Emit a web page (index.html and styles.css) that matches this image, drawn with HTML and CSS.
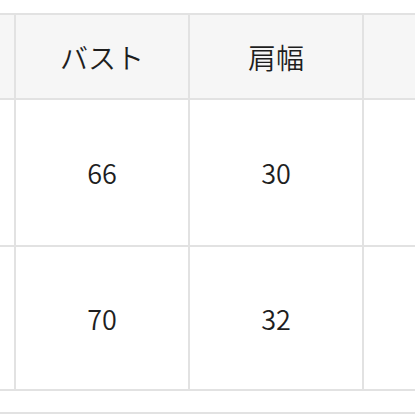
FILE: index.html
```html
<!DOCTYPE html>
<html lang="ja">
<head>
<meta charset="utf-8">
<link rel="stylesheet" href="styles.css">
</head>
<body>
<div class="table">
  <div class="cell head"></div>
  <div class="cell head">バスト</div>
  <div class="cell head">肩幅</div>
  <div class="cell head"></div>
  <div class="cell"></div>
  <div class="cell num">66</div>
  <div class="cell num">30</div>
  <div class="cell"></div>
  <div class="cell"></div>
  <div class="cell num">70</div>
  <div class="cell num">32</div>
  <div class="cell"></div>
</div>
<div class="footer"></div>
</body>
</html>
```
FILE: styles.css
```css
html, body {
  margin: 0;
  padding: 0;
  background: #ffffff;
  overflow: hidden;
}
body {
  width: 415px;
  height: 415px;
  font-family: "Noto Sans CJK JP", "Noto Sans", sans-serif;
  color: #1e1e1e;
}
.table {
  margin-top: 13px;
  padding: 2px 0;
  display: grid;
  grid-template-columns: 14px 172px 172px 1fr;
  grid-template-rows: 83px 145px 142px;
  gap: 2px;
  background: #e2e2e2;
}
.cell {
  background: #ffffff;
  display: flex;
  align-items: center;
  justify-content: center;
  font-size: 28px;
  font-weight: 350;
  line-height: 1;
}
.cell.num {
  font-size: 27px;
}
.cell.head {
  background: #f6f6f6;
}
.footer {
  height: 21px;
  border-bottom: 2px solid #e2e2e2;
}
```
